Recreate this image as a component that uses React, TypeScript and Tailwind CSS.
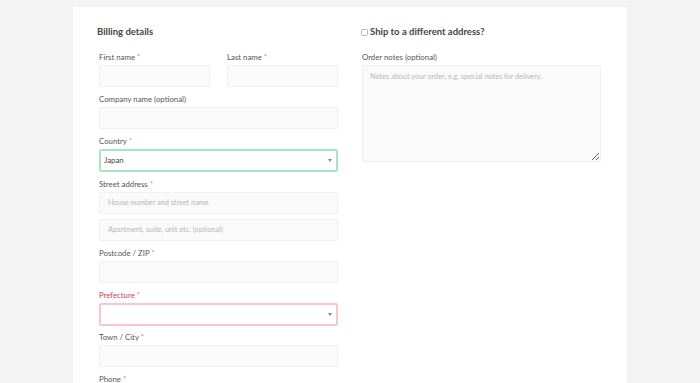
import React from "react";

const Req = () => <span className="text-[#ee7d8c]"> *</span>;

function Label({ children, red }: { children: React.ReactNode; red?: boolean }) {
  return (
    <div className={`text-[7.8px] leading-[10px] mb-[3px] ${red ? "text-[#c9414c]" : "text-[#555555]"}`}>
      {children}
    </div>
  );
}

function Input({ placeholder, className = "" }: { placeholder?: string; className?: string }) {
  return (
    <div
      className={`h-[22px] w-full bg-[#fafafa] border border-[#f0f0f0] rounded-[2px] flex items-center pl-[8px] text-[7.3px] text-[#b8b8b8] ${className}`}
    >
      {placeholder}
    </div>
  );
}

function Select({ value, tone }: { value?: string; tone: "green" | "pink" }) {
  return (
    <div
      className={`h-[23px] w-full bg-white rounded-[2px] border-[2px] flex items-center justify-between pl-[3px] pr-[4px] text-[7.8px] text-[#444] ${
        tone === "green" ? "border-[#a7e5c4]" : "border-[#f7c6cf]"
      }`}
    >
      <span>{value}</span>
      <svg width="4" height="3" viewBox="0 0 4 3">
        <path d="M0 0 L4 0 L2 3 Z" fill="#888" />
      </svg>
    </div>
  );
}

export default function App() {
  return (
    <div
      className="w-[700px] h-[383px] overflow-hidden bg-[#f3f3f3]"
      style={{ fontFamily: "Lato, 'Open Sans', sans-serif" }}
    >
      <div className="ml-[73px] mt-[7px] w-[554px] h-[400px] bg-white pt-[18px] px-[26px] flex gap-[24px]">
        {/* Left */}
        <div className="w-[239px] flex flex-col">
          <div className="text-[9.5px] leading-[14px] font-bold text-[#444] -ml-[2px] mb-[13px]">
            Billing details
          </div>
          <div className="flex gap-[17px] mb-[7px]">
            <div className="flex-1">
              <Label>
                First name<Req />
              </Label>
              <Input />
            </div>
            <div className="flex-1">
              <Label>
                Last name<Req />
              </Label>
              <Input />
            </div>
          </div>
          <div className="mb-[7px]">
            <Label>Company name (optional)</Label>
            <Input />
          </div>
          <div className="mb-[7px]">
            <Label>
              Country<Req />
            </Label>
            <Select value="Japan" tone="green" />
          </div>
          <div className="mb-[7px]">
            <Label>
              Street address<Req />
            </Label>
            <Input placeholder="House number and street name" className="mb-[5px]" />
            <Input placeholder="Apartment, suite, unit etc. (optional)" />
          </div>
          <div className="mb-[7px]">
            <Label>
              Postcode / ZIP<Req />
            </Label>
            <Input />
          </div>
          <div className="mb-[6px]">
            <Label red>
              Prefecture<Req />
            </Label>
            <Select tone="pink" />
          </div>
          <div className="mb-[7px]">
            <Label>
              Town / City<Req />
            </Label>
            <Input />
          </div>
          <div>
            <Label>
              Phone<Req />
            </Label>
            <Input />
          </div>
        </div>
        {/* Right */}
        <div className="w-[239px] flex flex-col">
          <div className="flex items-center text-[9.5px] leading-[14px] font-bold text-[#444] -ml-[1px] mb-[13px]">
            <span className="inline-block w-[7px] h-[7px] border border-[#b5b5b5] rounded-[1.5px] mr-[2px] mt-[1px]" />
            Ship to a different address?
          </div>
          <Label>Order notes (optional)</Label>
          <textarea
            className="h-[97px] w-full bg-[#fafafa] border border-[#f0f0f0] rounded-[2px] px-[7px] py-[6px] text-[7.3px] outline-none placeholder:text-[#b8b8b8]"
            placeholder="Notes about your order, e.g. special notes for delivery."
          />
        </div>
      </div>
    </div>
  );
}
